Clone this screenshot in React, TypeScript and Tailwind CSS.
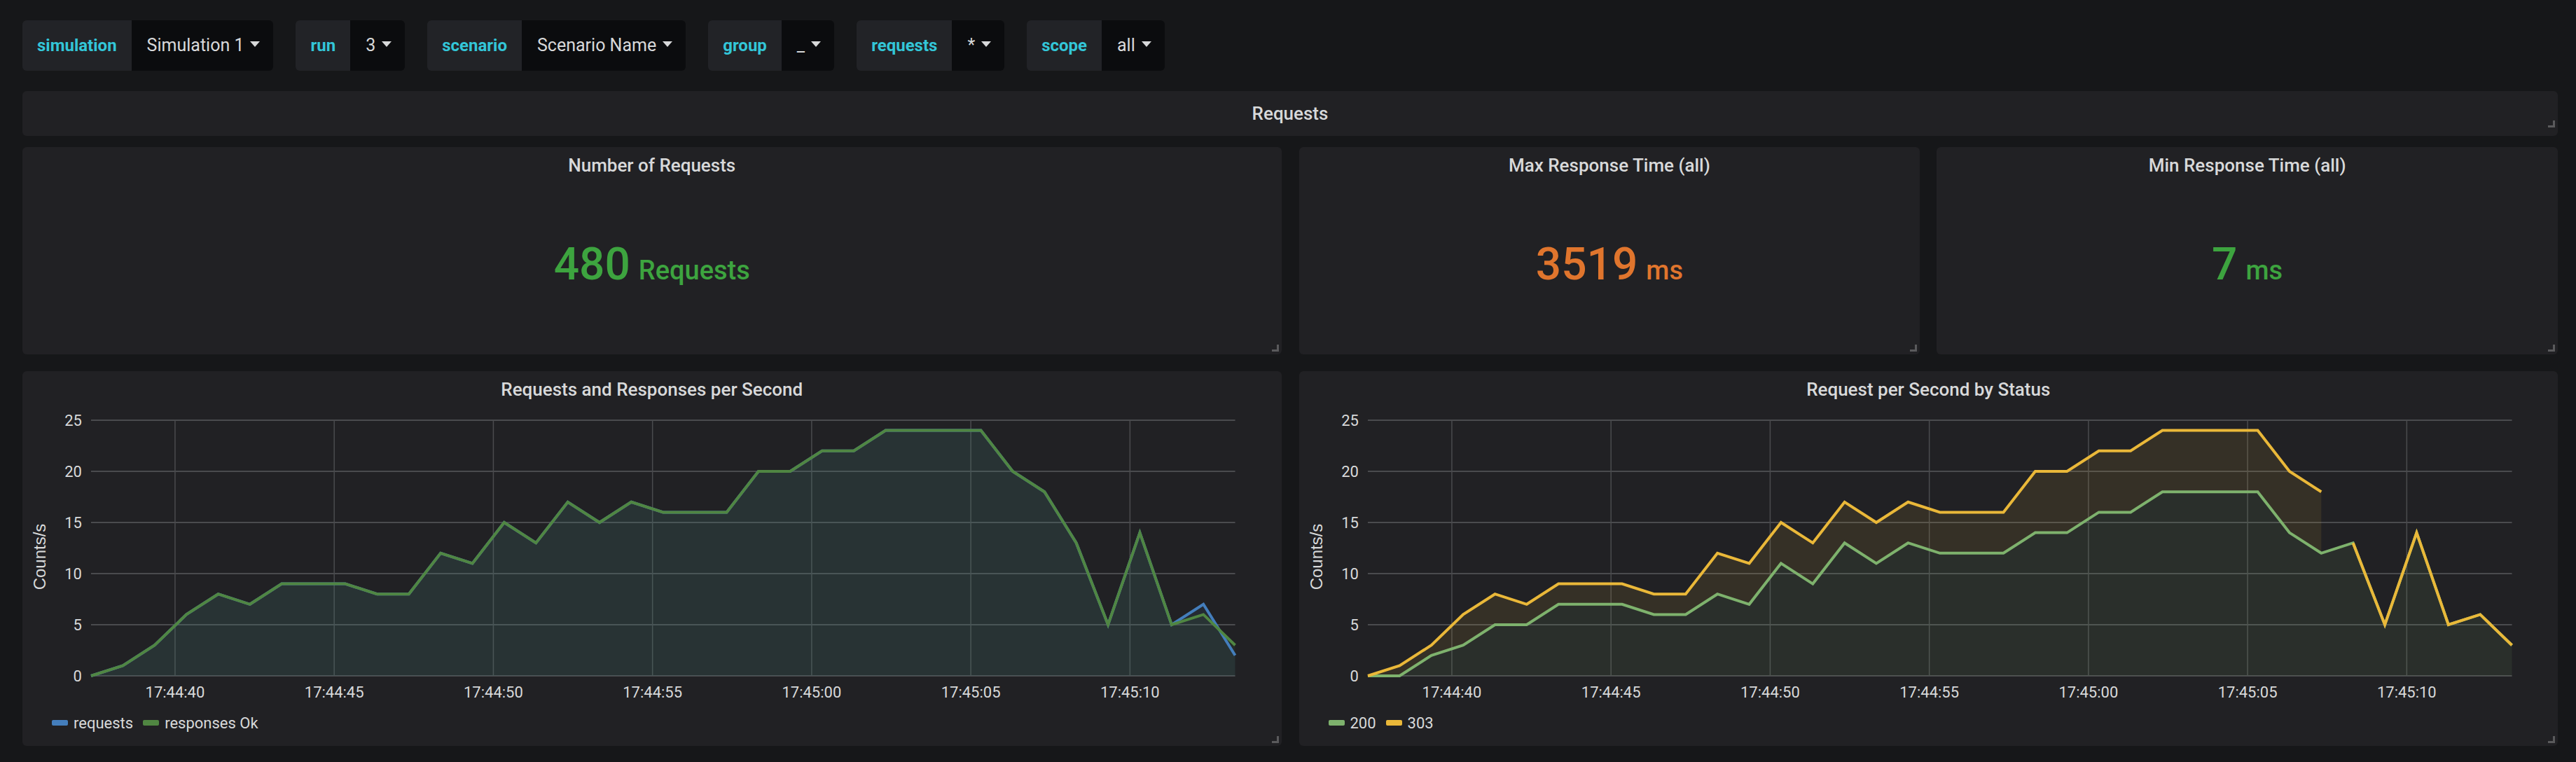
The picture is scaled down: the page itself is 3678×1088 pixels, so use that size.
import React from 'react';

// one sample per second, starting a bit before 17:44:40
const RESPONSES_OK = [0, 1, 3, 6, 8, 7, 9, 9, 9, 8, 8, 12, 11, 15, 13, 17, 15, 17, 16, 16, 16, 20, 20, 22, 22, 24, 24, 24, 24, 20, 18, 13, 5, 14, 5, 6, 3];
const REQUESTS = RESPONSES_OK.map((v, i) => (i === 35 ? 7 : i === 36 ? 2 : v));
const STATUS_200 = [0, 0, 2, 3, 5, 5, 7, 7, 7, 6, 6, 8, 7, 11, 9, 13, 11, 13, 12, 12, 12, 14, 14, 16, 16, 18, 18, 18, 18, 14, 12, 13, 5, 14, 5, 6, 3];

const X0 = 98;
const DX = 45.39;
const xAt = (i: number) => X0 + i * DX;
const yAt = (v: number) => 385 - v * 14.6;

const Y_TICKS = [0, 5, 10, 15, 20, 25];
const X_TICKS = ['17:44:40', '17:44:45', '17:44:50', '17:44:55', '17:45:00', '17:45:05', '17:45:10'];

const line = (vals: number[], from = 0, to = vals.length - 1) => {
  const pts: string[] = [];
  for (let i = from; i <= to; i++) pts.push(`${xAt(i).toFixed(1)},${yAt(vals[i]).toFixed(1)}`);
  return pts.join(' ');
};

const area = (vals: number[]) =>
  `M${xAt(0)},${yAt(0)} L${line(vals).split(' ').join(' L')} L${xAt(vals.length - 1)},${yAt(0)} Z`;

const band = (top: number[], bottom: number[], to: number) => {
  const up: string[] = [];
  for (let i = 0; i <= to; i++) up.push(`${xAt(i)},${yAt(top[i])}`);
  const down: string[] = [];
  for (let i = to; i >= 0; i--) down.push(`${xAt(i)},${yAt(bottom[i])}`);
  return `M${up.join(' L')} L${down.join(' L')} Z`;
};

function ResizeHandle({ bottom = 'bottom-[4px]' }: { bottom?: string }) {
  return (
    <div
      className={`absolute right-[4px] ${bottom} h-[10px] w-[10px] border-r-[3px] border-b-[3px] border-[#5a5a5c]`}
    />
  );
}

function Variable({ label, value }: { label: string; value: string }) {
  return (
    <div className="flex h-full overflow-hidden rounded-[6px]">
      <div className="flex items-center bg-[#222327] px-[21px] text-[24px] font-bold text-[#33c6d8]">
        {label}
      </div>
      <div className="flex items-center bg-[#0b0c0e] pl-[22px] pr-[19px] text-[25px] text-[#d8d9da]">
        {value}
        <span className="ml-[9px] -mt-[4px] h-0 w-0 border-x-[7px] border-t-[8px] border-x-transparent border-t-[#d8d9da]" />
      </div>
    </div>
  );
}

function StatPanel({
  title,
  value,
  unit,
  color,
}: {
  title: string;
  value: string;
  unit: string;
  color: string;
}) {
  return (
    <div className="relative flex h-full flex-col rounded-[6px] bg-[#212124]">
      <div className="h-[60px] pt-[10px] text-center text-[26px] font-medium leading-[32px] text-[#d8d9da]">
        {title}
      </div>
      <div className={`flex flex-1 items-baseline justify-center pb-[11px] pt-[76px] font-medium ${color}`}>
        <span className="text-[64px] leading-none">{value}</span>
        <span className="ml-[12px] text-[38px] leading-none">{unit}</span>
      </div>
      <ResizeHandle />
    </div>
  );
}

function Axes() {
  return (
    <g>
      {Y_TICKS.map((t) => (
        <g key={t}>
          <line x1={X0} x2={xAt(36)} y1={yAt(t)} y2={yAt(t)} stroke="#4a4b4e" strokeWidth={2} />
          <text x={85} y={yAt(t) + 8} textAnchor="end" fontSize={22} fill="#d8d9da">
            {t}
          </text>
        </g>
      ))}
      {X_TICKS.map((t, i) => {
        const x = 218 + i * 227.3;
        return (
          <g key={t}>
            <line x1={x} x2={x} y1={yAt(25)} y2={yAt(0)} stroke="#4a4b4e" strokeWidth={1.5} />
            <text x={x} y={416} textAnchor="middle" fontSize={22} fill="#d8d9da">
              {t}
            </text>
          </g>
        );
      })}
      <text
        transform="translate(33,215) rotate(-90)"
        textAnchor="middle"
        fontSize={24}
        fill="#d8d9da"
        fontFamily="'Liberation Sans', Arial, sans-serif"
      >
        Counts/s
      </text>
    </g>
  );
}

function ChartPanel({
  title,
  legend,
  children,
}: {
  title: string;
  legend: { name: string; color: string }[];
  children: React.ReactNode;
}) {
  return (
    <div className="relative flex h-full flex-col rounded-[6px] bg-[#212124]">
      <div className="h-[50px] pt-[10px] text-center text-[26px] font-medium leading-[32px] text-[#d8d9da]">
        {title}
      </div>
      <svg className="block overflow-visible font-[family-name:Roboto,sans-serif]" width="100%" height={430} viewBox="0 0 1798 430" preserveAspectRatio="none">
        <Axes />
        {children}
      </svg>
      <div className="flex h-[44px] items-center gap-[14px] pl-[42px] text-[22px] text-[#d8d9da]">
        {legend.map((l) => (
          <div key={l.name} className="flex items-center gap-[8px]">
            <span className="h-[8px] w-[23px] rounded-[2px]" style={{ backgroundColor: l.color }} />
            {l.name}
          </div>
        ))}
      </div>
      <ResizeHandle />
    </div>
  );
}

export default function App() {
  return (
    <div className="min-h-screen w-full bg-[#161719] pl-[32px] pr-[26px] pt-[29px] font-[family-name:Roboto,sans-serif] text-[#d8d9da]">
      <div className="flex h-[72px] gap-[32px]">
        <Variable label="simulation" value="Simulation 1" />
        <Variable label="run" value="3" />
        <Variable label="scenario" value="Scenario Name" />
        <Variable label="group" value="_" />
        <Variable label="requests" value="*" />
        <Variable label="scope" value="all" />
      </div>

      <div className="relative mt-[29px] flex h-[64px] items-center justify-center rounded-[6px] bg-[#212124] text-[26px] font-medium">
        Requests
        <ResizeHandle bottom="bottom-[12px]" />
      </div>

      <div className="mt-[16px] grid h-[296px] grid-cols-2 gap-[25px]">
        <StatPanel title="Number of Requests" value="480" unit="Requests" color="text-[#3da43f]" />
        <div className="grid grid-cols-2 gap-[24px]">
          <StatPanel title="Max Response Time (all)" value="3519" unit="ms" color="text-[#e0752d]" />
          <StatPanel title="Min Response Time (all)" value="7" unit="ms" color="text-[#3da43f]" />
        </div>
      </div>

      <div className="mt-[24px] grid h-[535px] grid-cols-2 gap-[25px]">
        <ChartPanel
          title="Requests and Responses per Second"
          legend={[
            { name: 'requests', color: '#447ebc' },
            { name: 'responses Ok', color: '#508642' },
          ]}
        >
          <path d={area(REQUESTS)} fill="#447ebc" fillOpacity={0.1} />
          <path d={area(RESPONSES_OK)} fill="#508642" fillOpacity={0.1} />
          <polyline points={line(REQUESTS)} fill="none" stroke="#447ebc" strokeWidth={4} />
          <polyline points={line(RESPONSES_OK)} fill="none" stroke="#508642" strokeWidth={4} />
        </ChartPanel>
        <ChartPanel
          title="Request per Second by Status"
          legend={[
            { name: '200', color: '#7eb26d' },
            { name: '303', color: '#eab839' },
          ]}
        >
          <path d={area(STATUS_200)} fill="#7eb26d" fillOpacity={0.1} />
          <path d={band(RESPONSES_OK, STATUS_200, 30)} fill="#eab839" fillOpacity={0.1} />
          <polyline points={line(STATUS_200)} fill="none" stroke="#7eb26d" strokeWidth={4} />
          <polyline points={line(RESPONSES_OK, 0, 30)} fill="none" stroke="#eab839" strokeWidth={4} />
          <polyline points={line(STATUS_200, 31, 36)} fill="none" stroke="#eab839" strokeWidth={4} />
        </ChartPanel>
      </div>
    </div>
  );
}
